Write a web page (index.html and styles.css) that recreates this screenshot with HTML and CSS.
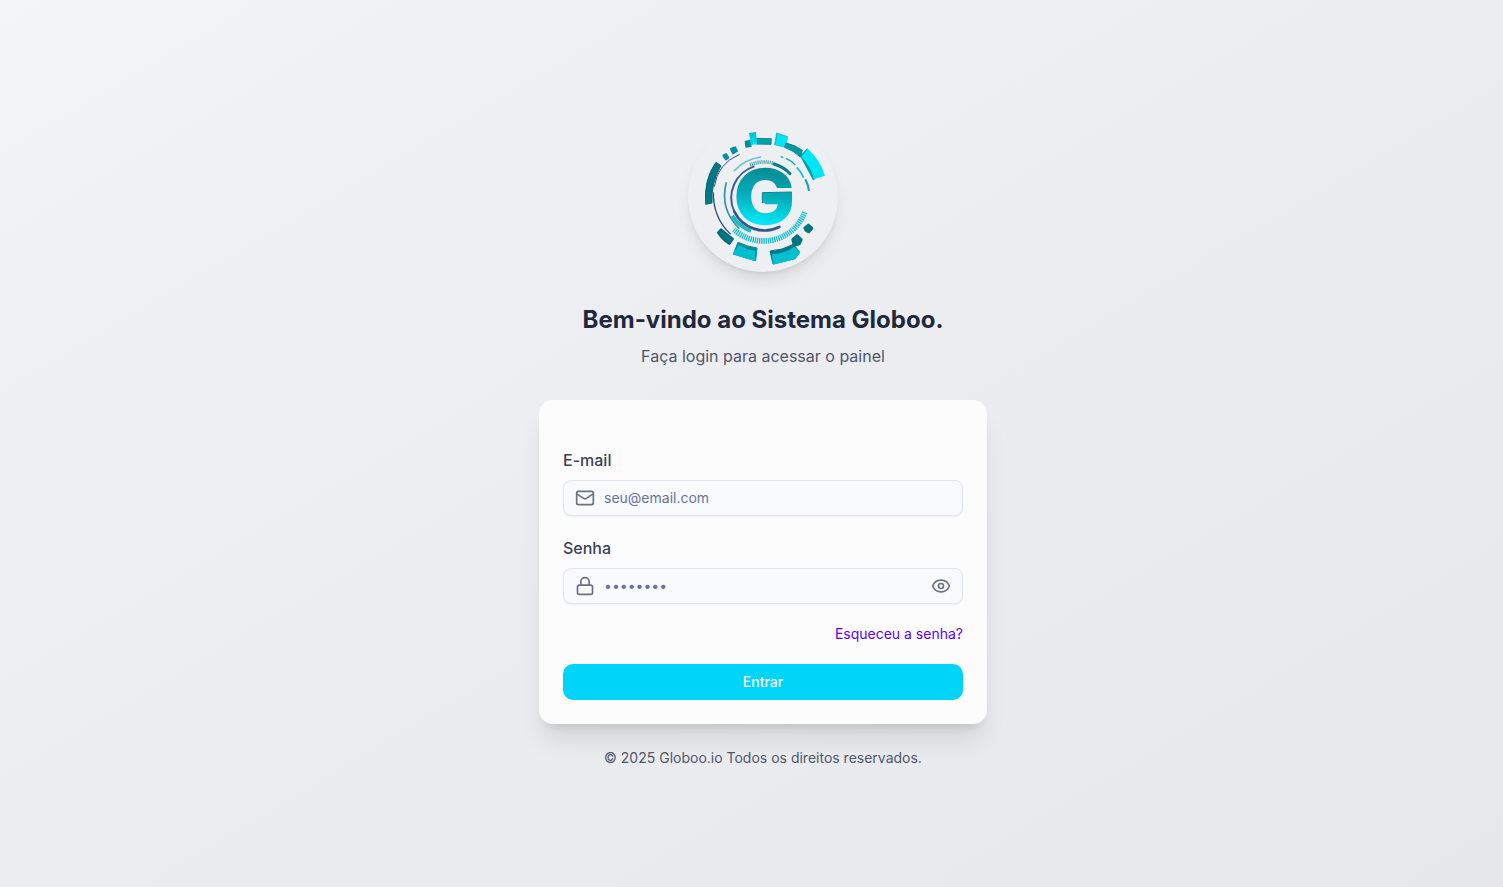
FILE: index.html
```html
<!DOCTYPE html>
<html lang="pt-BR">
<head>
<meta charset="utf-8">
<title>Globoo</title>
<link rel="stylesheet" href="styles.css">
</head>
<body>
<main class="page">
  <div class="logo">
    <svg viewBox="24 21 450 450" width="150" height="150" fill="none" role="img" aria-label="Globoo">
      <defs>
        <linearGradient id="g" gradientUnits="userSpaceOnUse" x1="265" y1="158" x2="245" y2="331"><stop offset="0" stop-color="#078b95"/><stop offset="0.5" stop-color="#04adba"/><stop offset="0.95" stop-color="#00e6f7"/></linearGradient>
        <linearGradient id="tab" x1="0" y1="0" x2="0" y2="1"><stop offset="0" stop-color="#00bccb"/><stop offset="1" stop-color="#00e3f4"/></linearGradient>
      </defs>
      <g stroke-linejoin="round" stroke-width="6">
        <path fill="#008f9b" stroke="#008f9b" d="M197 80l13-3 2 16-13 2zM153 102l12-5 6 11-12 7zM130 122l8-5 7 11-7 5z"/>
        <path fill="#00a0ad" stroke="#008f9b" stroke-width="3" d="M230 70l44 1-1 17-44-1z"/>
        <path fill="url(#tab)" d="M207 54l21-3 3 37-18 2z"/>
        <path fill="#00cfdd" stroke="#00a8b5" stroke-width="2" d="M290 54l33 11-9 31-30-7z"/>
        <path fill="#00e3f4" d="M293 57l31 9-9 31-27-8z"/>
        <path fill="#009aa7" stroke="#008591" stroke-width="3" d="M318 84q27 6 49 22l-6 20q-20-19-47-29z"/>
        <path fill="#009eaa" d="M382 99l-22 24 39 72 7-2z"/>
        <path fill="#00e5f6" d="M383 101q38 34 52 81l-33 11q-10-40-38-67z"/>
        <path fill="#007984" stroke="#006b76" stroke-width="3" d="M108 142l15 10q-31 53-27 112l-19 4q-6-76 31-126z"/>
        <path fill="#007984" stroke="#006b76" d="M123 343l36 29-11 15q-20-13-34-34z"/>
        <path fill="#007984" stroke="#007580" stroke-width="8" d="M338 373l14-11 12 12-6 13-16 4zM374 339l11-9 11 10-10 11q-10-4-12-12z"/>
        <path fill="#008f9b" stroke="#008f9b" stroke-width="3" d="M174 382q28 13 57 17l-4 38-67-20z"/>
        <path fill="#00bfce" d="M176 390q27 16 51 18l-2 31-68-21z"/>
        <path fill="#007984" stroke="#007984" stroke-width="3" d="M270 408q37-2 70-20l19 23-14 20-66 16z"/>
        <path fill="#00bfce" d="M275 418q38-2 69-23l17 16-14 21-68 17z"/>
      </g>
      <g>
        <path stroke="#344f7d" stroke-width="3" d="M179 118Q112 146 103 215"/>
        <path stroke="#344f7d" stroke-width="4" d="M100 232Q99 309 152 358"/>
        <path stroke="#299ba5" stroke-width="5" d="M139 202Q118 283 178 341"/>
        <path stroke="#62c5cd" stroke-width="5" d="M162 168Q195 132 243 126"/>
        <path stroke="#12aeba" stroke-width="4" d="M302 125l8 2M318 130q16 7 28 20"/>
        <path stroke="#08c7d5" stroke-width="5" d="M350 157q13 13 21 31"/>
        <path stroke="#14a3ae" stroke-width="6" d="M376 193q9 17 11 35"/>
        <path stroke="#329aa3" stroke-width="11" stroke-dasharray="3 3" d="M210 150A105 105 0 0 1 282 145"/>
        <path stroke="#087e87" stroke-width="9" stroke-linecap="round" d="M282 147Q312 156 330 176"/>
        <path stroke="#19b9c5" stroke-width="11" d="M157 302Q177 334 213 348"/>
        <path stroke="#14bdc9" stroke-width="17" stroke-dasharray="4 2.5" d="M374 292A132 132 0 0 1 162 344"/>
        <path stroke="#40608e" stroke-width="6" d="M223 154A99 99 0 0 0 163 290"/>
        <path stroke="#355886" stroke-width="8" stroke-linecap="round" d="M163 290A101 101 0 0 0 298 336"/>
      </g>
      <text class="logo-letter" x="162" y="325" textLength="182" lengthAdjust="spacingAndGlyphs" fill="url(#g)" stroke="url(#g)" stroke-width="7">G</text>
      <path fill="url(#g)" d="M247 233l89-2v20l-5 13h-84z"/>
      <path stroke="#088894" stroke-width="3" d="M247 264v-31l88-2"/>
    </svg>
  </div>
  <h1 class="title">Bem-vindo ao Sistema Globoo.</h1>
  <p class="subtitle">Faça login para acessar o painel</p>
  <form class="card">
    <label class="label" for="email">E-mail</label>
    <div class="field">
      <svg class="icon" viewBox="0 0 24 24"><rect x="2" y="4" width="20" height="16" rx="2"/><path d="m22 7-8.97 5.7a1.94 1.94 0 0 1-2.06 0L2 7"/></svg>
      <input class="input" id="email" type="email" placeholder="seu@email.com">
    </div>
    <label class="label" for="password">Senha</label>
    <div class="field">
      <svg class="icon" viewBox="0 0 24 24"><rect x="3" y="11" width="18" height="11" rx="2"/><path d="M7 11V7a5 5 0 0 1 10 0v4"/></svg>
      <input class="input" id="password" type="password" placeholder="••••••••">
      <svg class="icon" viewBox="0 0 24 24"><path d="M2.062 12.348a1 1 0 0 1 0-.696 10.75 10.75 0 0 1 19.876 0 1 1 0 0 1 0 .696 10.75 10.75 0 0 1-19.876 0"/><circle cx="12" cy="12" r="3"/></svg>
    </div>
    <a class="forgot">Esqueceu a senha?</a>
    <button class="submit" type="button">Entrar</button>
  </form>
  <footer class="footer">© 2025 Globoo.io Todos os direitos reservados.</footer>
</main>
</body>
</html>
```
FILE: styles.css
```css
* { box-sizing: border-box; margin: 0; }
body { font-family: Inter, sans-serif; color: #20283c; }
.page {
  height: 100vh;
  padding: 122px 0 0 23px;
  display: flex;
  flex-direction: column;
  align-items: center;
  background: linear-gradient(to bottom right, #f3f5f7, #f0f1f4 15%, #ecedf1 50%, #e5e7eb);
}
.logo {
  width: 150px;
  height: 150px;
  margin-bottom: 32px;
  border-radius: 50%;
  box-shadow: 0 10px 15px -3px rgba(0,0,0,.1), 0 4px 6px -4px rgba(0,0,0,.1);
  background: #eeeff3;
}
.logo svg { display: block; }
.logo-letter { font: 700 220px Inter, sans-serif; }
.title { font-size: 24px; line-height: 32px; font-weight: 700; margin-bottom: 8px; }
.subtitle { font-size: 16px; line-height: 24px; color: #50566a; margin-bottom: 32px; }
.card {
  width: 448px;
  height: 324px;
  padding: 48px 24px 24px;
  display: flex;
  flex-direction: column;
  border-radius: 14px;
  background: #fcfcfc;
  box-shadow: 0 20px 25px -5px rgba(0,0,0,.1), 0 8px 10px -6px rgba(0,0,0,.1);
}
.label { font-size: 16px; line-height: 24px; font-weight: 500; color: #3a4157; margin-bottom: 8px; }
.field {
  height: 36px;
  margin-bottom: 20px;
  padding: 0 11px;
  display: flex;
  align-items: center;
  gap: 9px;
  border: 1px solid #e2e5f2;
  border-radius: 8px;
  background: #f9fafc;
  box-shadow: 0 1px 2px rgba(0,0,0,.05);
}
.icon { width: 20px; height: 20px; flex: none; fill: none; stroke: #6b7085; stroke-width: 2; stroke-linecap: round; stroke-linejoin: round; }
.input { flex: 1; min-width: 0; padding: 0; border: 0; outline: 0; background: none; font: 400 14px/20px Inter, sans-serif; }
.input::placeholder { color: #68749a; }
.forgot { align-self: flex-end; font-size: 14px; line-height: 20px; color: #5b00f5; margin-bottom: 20px; }
.submit { height: 36px; border: 0; border-radius: 10px; background: #00d5f9; color: #fff; font: 500 14px/20px Inter, sans-serif; }
.footer { margin-top: 24px; font-size: 14px; line-height: 20px; color: #50566a; }
```
